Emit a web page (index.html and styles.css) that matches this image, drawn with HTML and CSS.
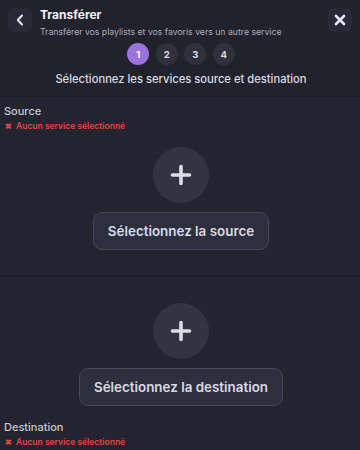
FILE: index.html
```html
<!DOCTYPE html>
<html lang="fr">
<head>
<meta charset="utf-8">
<link rel="stylesheet" href="styles.css">
</head>
<body>
<div class="app">
  <header class="header">
    <div class="top">
      <button class="icon-btn" aria-label="Retour">
        <svg width="10" height="12" viewBox="0 0 10 12"><path d="M7 1.5 L2.8 6 L7 10.5" fill="none" stroke="#e6e7ee" stroke-width="2" stroke-linecap="round" stroke-linejoin="round"/></svg>
      </button>
      <div class="titles">
        <div class="title">Transférer</div>
        <div class="subtitle">Transférer vos playlists et vos favoris vers un autre service</div>
      </div>
      <button class="icon-btn" aria-label="Fermer">
        <svg width="12" height="12" viewBox="0 0 12 12"><path d="M2 2 L10 10 M10 2 L2 10" fill="none" stroke="#e6e7ee" stroke-width="2.6" stroke-linecap="round"/></svg>
      </button>
    </div>
    <div class="steps">
      <span class="step active">1</span>
      <span class="step">2</span>
      <span class="step">3</span>
      <span class="step">4</span>
    </div>
    <div class="heading">Sélectionnez les services source et destination</div>
  </header>

  <section class="section source">
    <div class="label">Source</div>
    <div class="error"><span class="x">✖</span>Aucun service sélectionné</div>
    <div class="picker">
      <div class="plus">
        <svg width="22" height="22" viewBox="0 0 22 22"><path d="M11 2.5 V19.5 M2.5 11 H19.5" stroke="#dcdde4" stroke-width="3.6" stroke-linecap="round"/></svg>
      </div>
      <button class="select-btn">Sélectionnez la source</button>
    </div>
  </section>

  <section class="section dest">
    <div class="picker">
      <div class="plus">
        <svg width="22" height="22" viewBox="0 0 22 22"><path d="M11 2.5 V19.5 M2.5 11 H19.5" stroke="#dcdde4" stroke-width="3.6" stroke-linecap="round"/></svg>
      </div>
      <button class="select-btn">Sélectionnez la destination</button>
    </div>
    <div class="label dest-label">Destination</div>
    <div class="error"><span class="x">✖</span>Aucun service sélectionné</div>
  </section>
</div>
</body>
</html>
```

FILE: styles.css
```css
* { box-sizing: border-box; }
html, body {
  margin: 0;
  padding: 0;
  background: #23242f;
  font-family: Inter, "Noto Sans", "Liberation Sans", sans-serif;
  color: #e6e7ee;
}
.app {
  width: 360px;
  height: 450px;
  overflow: hidden;
  background: #23242f;
}
.header {
  background: #21222c;
  padding: 8px 8px 9px 8px;
  border-bottom: 1px solid #1a1b23;
}
.top {
  display: flex;
  align-items: flex-start;
}
.icon-btn {
  width: 24px;
  height: 24px;
  border: none;
  padding: 0;
  border-radius: 5px;
  background: #282934;
  display: flex;
  align-items: center;
  justify-content: center;
  flex: none;
}
.titles {
  flex: 1;
  margin-left: 8px;
}
.title {
  font-size: 12px;
  font-weight: 700;
  line-height: 14px;
  color: #f2f3f7;
}
.subtitle {
  margin-top: 4px;
  font-size: 8.7px;
  line-height: 12px;
  color: #a9abb9;
}
.steps {
  margin-top: 5px;
  display: flex;
  justify-content: center;
  gap: 6.5px;
  padding-left: 2px;
}
.step {
  width: 22px;
  height: 22px;
  border-radius: 50%;
  background: #30313d;
  color: #d9dae2;
  font-size: 9.5px;
  font-weight: 700;
  display: flex;
  align-items: center;
  justify-content: center;
}
.step.active {
  background: #9c72dd;
  color: #ffffff;
}
.heading {
  margin-top: 6px;
  text-align: center;
  font-size: 11.2px;
  font-weight: 500;
  line-height: 16px;
  color: #dadbe4;
  padding-left: 2px;
}
.section {
  padding: 0 4px;
}
.source {
  padding-top: 7px;
  padding-bottom: 26px;
  border-bottom: 1px solid #1b1c25;
}
.dest {
  padding-top: 26px;
}
.label {
  font-size: 11px;
  font-weight: 500;
  line-height: 14px;
  color: #c7c8d3;
}
.dest-label {
  margin-top: 14px;
}
.error {
  margin-top: 3px;
  font-size: 8.5px;
  font-weight: 600;
  line-height: 11px;
  color: #e4443f;
  display: flex;
  align-items: center;
}
.error .x {
  font-size: 8px;
  width: 12px;
  padding-left: 1px;
}
.source .picker {
  margin-top: 15px;
}
.picker {
  display: flex;
  flex-direction: column;
  align-items: center;
  padding-left: 2px;
}
.plus {
  width: 56px;
  height: 56px;
  border-radius: 50%;
  background: #333443;
  display: flex;
  align-items: center;
  justify-content: center;
}
.select-btn {
  margin-top: 9px;
  height: 38px;
  padding: 0 14px;
  border-radius: 9px;
  border: 1px solid #44465a;
  background: #2e2f3e;
  color: #d8d9e1;
  font-family: Inter, "Noto Sans", "Liberation Sans", sans-serif;
  font-size: 13.4px;
  font-weight: 600;
}
```
